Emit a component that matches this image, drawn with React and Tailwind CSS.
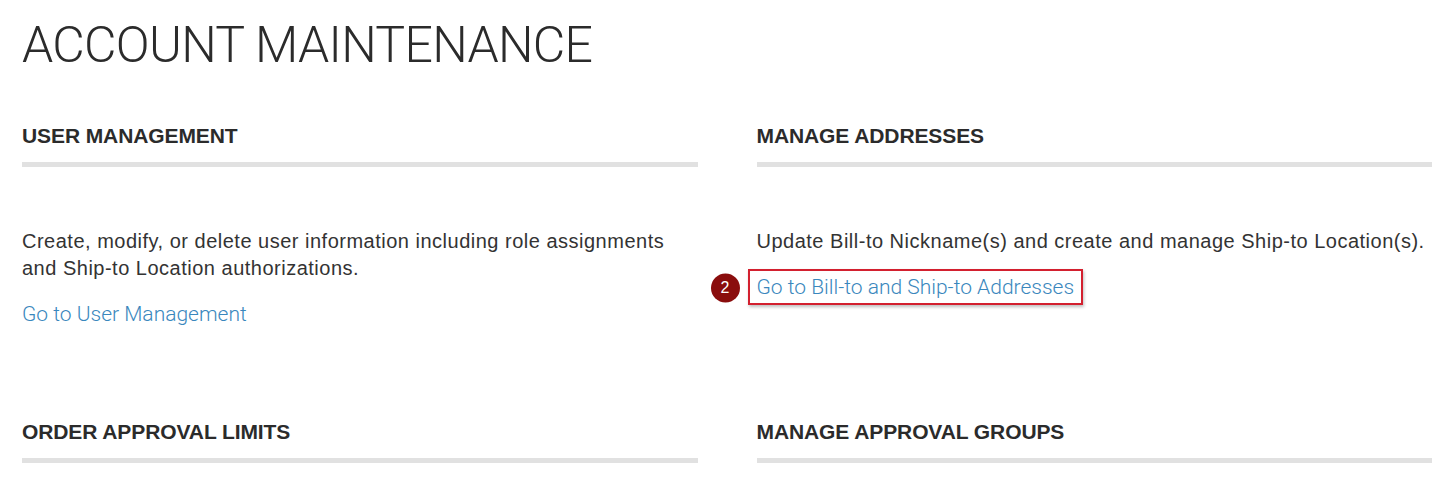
import React from 'react';

const sections = [
  {
    title: 'USER MANAGEMENT',
    body: 'Create, modify, or delete user information including role assignments and Ship-to Location authorizations.',
    link: 'Go to User Management',
  },
  {
    title: 'MANAGE ADDRESSES',
    body: 'Update Bill-to Nickname(s) and create and manage Ship-to Location(s).',
    link: 'Go to Bill-to and Ship-to Addresses',
    callout: 2,
  },
];

function SectionHeading({ children }) {
  return (
    <div className="border-b-[5px] border-[#e1e1e1] pb-[14px]">
      <h2 className="text-[21px] leading-[24px] font-bold text-[#2b2b2b] tracking-[-0.1px]">{children}</h2>
    </div>
  );
}

function Section({ title, body, link, callout }) {
  const linkClass = 'relative text-[21px] leading-[27px] text-[#3a87bd] font-light';
  return (
    <div>
      <SectionHeading>{title}</SectionHeading>
      <p className="mt-[61px] text-[20px] leading-[27px] text-[#333] tracking-[0.5px]">{body}</p>
      <div className="mt-[19px]">
        {callout ? (
          <span className="relative inline-block">
            <span className="absolute -left-[9px] -right-[9px] -top-[5px] -bottom-[4px] border-2 border-[#d3202f] shadow-[1px_2px_3px_rgba(0,0,0,0.25)]" />
            <span className="absolute -left-[46px] top-1/2 -translate-y-1/2 w-[29px] h-[29px] rounded-full bg-[#8a0d0d] text-white text-[16px] flex items-center justify-center">
              {callout}
            </span>
            <a href="#" className={linkClass} style={{ fontFamily: 'Roboto, sans-serif' }}>
              {link}
            </a>
          </span>
        ) : (
          <a href="#" className={linkClass} style={{ fontFamily: 'Roboto, sans-serif' }}>
            {link}
          </a>
        )}
      </div>
    </div>
  );
}

export default function App() {
  return (
    <div className="min-h-screen bg-white px-[22px] pt-[20px]" style={{ fontFamily: '"Liberation Sans", Arial, sans-serif' }}>
      <h1 className="text-[50px] leading-[50px] font-light text-[#2b2b2b] tracking-[-0.7px]" style={{ fontFamily: 'Roboto, sans-serif' }}>
        ACCOUNT MAINTENANCE
      </h1>
      <div className="mt-[54px] grid grid-cols-2 gap-x-[59px]">
        {sections.map((s) => (
          <Section key={s.title} {...s} />
        ))}
      </div>
      <div className="mt-[92px] grid grid-cols-2 gap-x-[59px]">
        <SectionHeading>ORDER APPROVAL LIMITS</SectionHeading>
        <SectionHeading>MANAGE APPROVAL GROUPS</SectionHeading>
      </div>
    </div>
  );
}
